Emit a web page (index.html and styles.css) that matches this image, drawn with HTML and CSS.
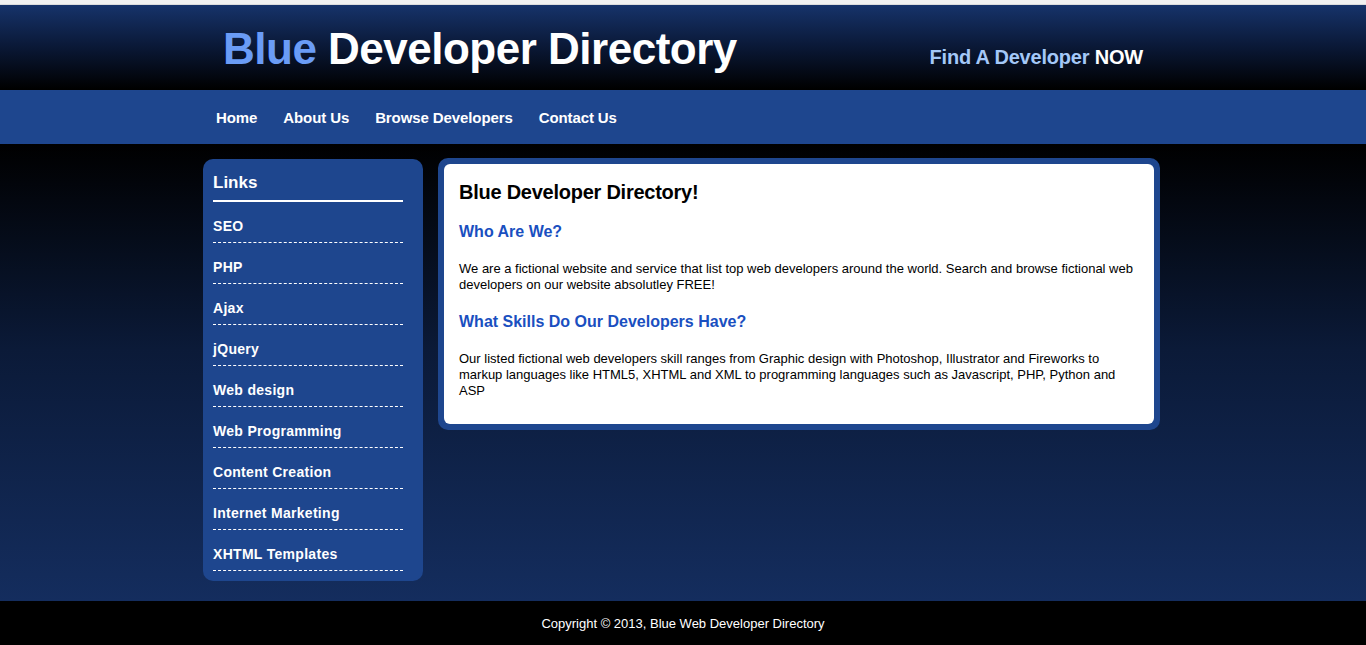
FILE: index.html
```html
<!DOCTYPE html>
<html>
<head>
<meta charset="utf-8">
<title>Blue Developer Directory</title>
<link rel="stylesheet" href="styles.css">
</head>
<body>
<div class="topstrip"></div>
<header class="header">
  <div class="wrap header-inner">
    <div class="logo"><span class="logo-blue">Blue</span> Developer Directory</div>
    <div class="tagline">Find A Developer <span class="now">NOW</span></div>
  </div>
</header>
<nav class="nav">
  <div class="wrap nav-inner">
    <a href="#" class="nav-link">Home</a>
    <a href="#" class="nav-link">About Us</a>
    <a href="#" class="nav-link">Browse Developers</a>
    <a href="#" class="nav-link">Contact Us</a>
  </div>
</nav>
<main class="main">
  <div class="wrap main-inner">
    <aside class="sidebar">
      <h3 class="side-title">Links</h3>
      <ul class="side-list">
        <li class="side-item">SEO</li>
        <li class="side-item">PHP</li>
        <li class="side-item">Ajax</li>
        <li class="side-item">jQuery</li>
        <li class="side-item">Web design</li>
        <li class="side-item">Web Programming</li>
        <li class="side-item">Content Creation</li>
        <li class="side-item">Internet Marketing</li>
        <li class="side-item">XHTML Templates</li>
      </ul>
    </aside>
    <section class="content">
      <div class="content-inner">
        <h1 class="c-title">Blue Developer Directory!</h1>
        <h2 class="c-sub">Who Are We?</h2>
        <p class="c-text">We are a fictional website and service that list top web developers around the world. Search and browse fictional web developers on our website absolutley FREE!</p>
        <h2 class="c-sub">What Skills Do Our Developers Have?</h2>
        <p class="c-text last">Our listed fictional web developers skill ranges from Graphic design with Photoshop, Illustrator and Fireworks to markup languages like HTML5, XHTML and XML to programming languages such as Javascript, PHP, Python and ASP</p>
      </div>
    </section>
  </div>
</main>
<footer class="footer">Copyright © 2013, Blue Web Developer Directory</footer>
</body>
</html>
```
FILE: styles.css
```css
* { box-sizing: border-box; }
html, body { margin: 0; padding: 0; }
body {
  font-family: "Liberation Sans", Arial, sans-serif;
  background: #000;
  color: #000;
}
.wrap { width: 960px; margin: 0 auto; }
.topstrip { height: 5px; background: #f1f1f1; border-bottom: 1px solid #dcdcdc; }
.header {
  height: 84px;
  background: linear-gradient(to bottom, #16336a 0%, #0a1836 50%, #000 100%);
}
.header-inner {
  height: 84px;
  display: flex;
  align-items: center;
  justify-content: space-between;
  padding: 0 20px;
}
.logo {
  color: #fff;
  font-weight: bold;
  font-size: 44px;
  line-height: 50px;
  letter-spacing: -0.5px;
  margin-top: 4px;
}
.logo-blue { color: #6a9cf6; }
.tagline {
  color: #a4c8f8;
  font-weight: bold;
  font-size: 20px;
  line-height: 24px;
  letter-spacing: -0.2px;
  margin-top: 20px;
}
.now { color: #fff; }
.nav { height: 54px; background: #1e468e; margin-top: 1px; }
.nav-inner { display: flex; align-items: center; height: 54px; }
.nav-link {
  color: #fff;
  text-decoration: none;
  font-weight: bold;
  font-size: 15px;
  letter-spacing: -0.1px;
  padding: 0 13px;
}
.main {
  background: linear-gradient(to bottom, #000 0%, #0b1a38 45%, #142d5e 100%);
  padding: 15px 0 20px;
}
.main-inner { display: flex; align-items: flex-start; }
.sidebar {
  width: 220px;
  background: #1e468e;
  border-radius: 10px;
  padding: 10px 20px 10px 10px;
  color: #fff;
}
.side-title {
  margin: 0;
  font-size: 17px;
  line-height: 20px;
  padding: 4px 0 7px;
  border-bottom: 2px solid #fff;
}
.side-list { list-style: none; margin: 0; padding: 0; }
.side-item {
  font-size: 14px;
  font-weight: bold;
  line-height: 17px;
  letter-spacing: 0.3px;
  padding: 16px 0 7px;
  border-bottom: 1px dashed #fff;
}
.content {
  margin-left: 15px;
  width: 722px;
  background: #1e468e;
  border-radius: 10px;
  padding: 6px;
  margin-top: -1px;
}
.content-inner {
  background: #fff;
  border-radius: 6px;
  padding: 16px 15px 25px;
}
.c-title {
  margin: 0 0 18px;
  font-size: 20px;
  line-height: 24px;
  letter-spacing: -0.25px;
}
.c-sub {
  margin: 0 0 19px;
  font-size: 16px;
  line-height: 20px;
  color: #1a4fc0;
}
.c-text {
  margin: 0 0 19px;
  font-size: 13px;
  line-height: 16px;
}
.c-text.last { margin-bottom: 0; }
.footer {
  height: 44px;
  background: #000;
  color: #fff;
  font-size: 13px;
  line-height: 46px;
  text-align: center;
}
```
